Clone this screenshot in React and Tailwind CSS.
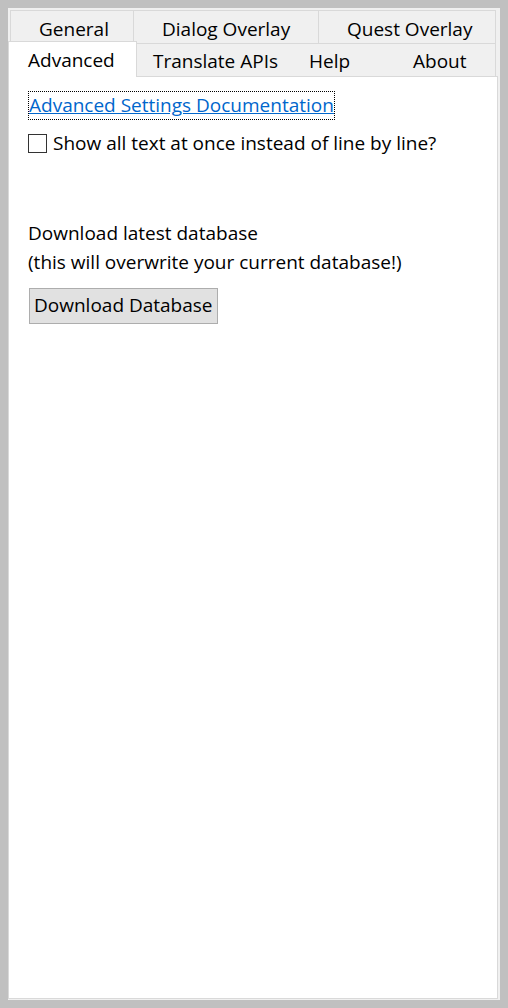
import React from 'react';

const Settings = () => {
  const topTabs = [
    { label: 'General', w: 'w-[123px]' },
    { label: 'Dialog Overlay', w: 'w-[185px]' },
    { label: 'Quest Overlay', w: 'w-[178px] border-r' },
  ];
  const bottomTabs = [
    { label: 'Translate APIs', w: 'w-[154px] pl-[16px]' },
    { label: 'Help', w: 'w-[104px] pl-[18px]' },
    { label: 'About', w: 'w-[101px] pl-[18px] border-r' },
  ];

  return (
    <div className="min-h-screen bg-[#c0c0c0] p-2 font-['Open_Sans',sans-serif] text-[19px] text-black">
      <div className="flex h-[992px] w-[492px] flex-col bg-[#f0f0f0]">
        {/* tab strip, first row */}
        <div className="ml-[2px] mt-[2px] flex h-[33px]">
          {topTabs.map((t) => (
            <div key={t.label} className={`flex items-center border-l border-t border-[#d9d9d9] pl-[28px] pt-[4px] ${t.w}`}>
              {t.label}
            </div>
          ))}
        </div>
        {/* tab strip, second row */}
        <div className="flex h-[33px]">
          <div className="relative z-10 -mt-[2px] flex h-[36px] w-[129px] items-center border-l border-r border-t border-[#d9d9d9] bg-white pl-[19px] pt-[2px]">
            Advanced
          </div>
          {bottomTabs.map((t) => (
            <div key={t.label} className={`flex items-center border-t border-[#d9d9d9] pt-[3px] ${t.w}`}>
              {t.label}
            </div>
          ))}
        </div>
        <div className="mb-[1px] mr-[2px] flex-1 border border-[#d9d9d9] bg-white px-[19px] pt-[14px]">
          <a href="#" className="inline-block border border-dotted border-black leading-[27px] text-[#0066cc] underline">
            Advanced Settings Documentation
          </a>
          <label className="mt-[9px] flex items-center gap-[6px]">
            <span className="h-[19px] w-[19px] border border-[#333333] bg-white"></span>
            Show all text at once instead of line by line?
          </label>
          <div className="mt-[61px] leading-[29px]">
            <p>Download latest database</p>
            <p>(this will overwrite your current database!)</p>
          </div>
          <button className="ml-[1px] mt-[11px] h-[36px] border border-[#adadad] bg-[#e1e1e1] px-[4px]">
            Download Database
          </button>
        </div>
      </div>
    </div>
  );
};

export default Settings;
